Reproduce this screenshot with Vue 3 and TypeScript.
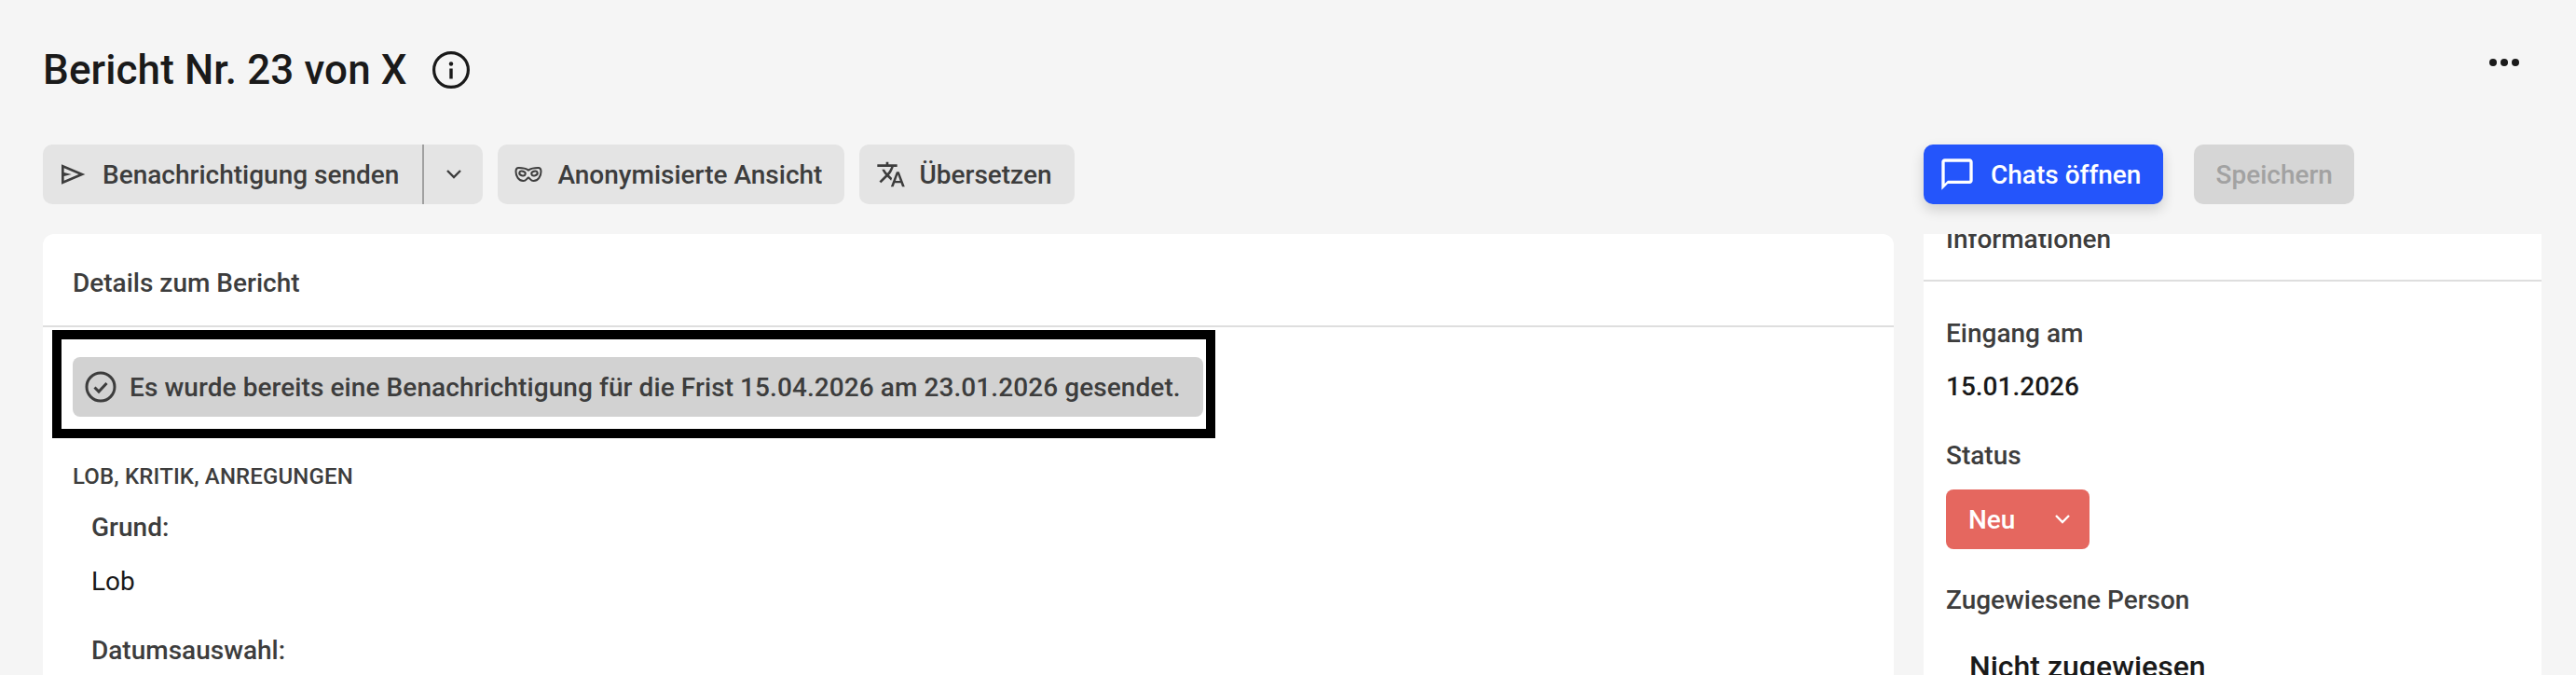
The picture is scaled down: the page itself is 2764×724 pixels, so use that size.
<template>
  <div class="page">
    <header class="page__head">
      <div class="page__title">
        <h1>Bericht Nr. 23 von X</h1>
        <svg class="info" width="40" height="40" viewBox="0 0 40 40" fill="none">
          <circle cx="20" cy="20" r="18.4" stroke="currentColor" stroke-width="3.2" />
          <circle cx="20" cy="13.5" r="2.2" fill="currentColor" />
          <rect x="18.3" y="18.5" width="3.4" height="11" fill="currentColor" />
        </svg>
      </div>
      <svg class="dots" width="32" height="8" viewBox="0 0 32 8" fill="currentColor">
        <circle cx="4" cy="4" r="4" /><circle cx="16" cy="4" r="4" /><circle cx="28" cy="4" r="4" />
      </svg>
    </header>

    <div class="grid">
      <div class="toolbar">
        <div class="btn btn--split">
          <span class="btn__main">
            <svg width="32" height="32" viewBox="0 -960 960 960" fill="currentColor"><path d="M120-160v-640l760 320-760 320Zm80-120 474-200-474-200v140l240 60-240 60v140Z" /></svg>
            Benachrichtigung senden
          </span>
          <span class="btn__caret">
            <svg width="20" height="12" viewBox="0 0 20 12" fill="none" stroke="currentColor" stroke-width="2.4"><path d="M3 2l7 7 7-7" /></svg>
          </span>
        </div>
        <div class="btn">
          <svg width="30" height="16" viewBox="0 0 30 16" fill="none" stroke="currentColor" stroke-width="2">
            <path d="M15 3.6C12.5 1.8 8.500 1 4.500 1 2.500 1 1.500 2.500 1.500 5c0 5 3 10 8 10 3 0 4-3 5.500-3.500C16.500 12 17.500 15 20.500 15c5 0 8-5 8-10 0-2.500-1-4-3-4-4 0-8 .8-10.500 2.600z" />
            <ellipse cx="8.500" cy="7" rx="3.300" ry="2.300" transform="rotate(18 8.500 7)" />
            <ellipse cx="21.500" cy="7" rx="3.300" ry="2.300" transform="rotate(-18 21.500 7)" />
          </svg>
          Anonymisierte Ansicht
        </div>
        <div class="btn btn--translate">
          <svg width="32" height="32" viewBox="0 -960 960 960" fill="currentColor"><path d="m476-80 182-480h84L924-80h-84l-43-122H603L560-80h-84ZM160-200l-56-56 202-202q-35-35-63.5-80T190-640h84q20 39 40 68t48 58q33-33 68.500-92.500T484-720H40v-80h280v-80h80v80h280v80H564q-21 72-63 148t-83 116l96 98-30 82-122-125-202 201Zm468-72h144l-72-204-72 204Z" /></svg>
          Übersetzen
        </div>
      </div>

      <div class="actions">
        <div class="btn btn--primary">
          <svg width="40" height="40" viewBox="0 0 24 24" fill="currentColor"><path d="M20 2H4c-1.100 0-2 .9-2 2v18l4-4h14c1.100 0 2-.9 2-2V4c0-1.100-.9-2-2-2zm0 14H6l-2 2V4h16v12z" /></svg>
          Chats öffnen
        </div>
        <div class="btn btn--disabled">Speichern</div>
      </div>

      <section class="card card--details">
        <div class="card__head">Details zum Bericht</div>
        <div class="marked">
          <div class="notice">
            <svg width="34" height="34" viewBox="0 0 34 34" fill="none" stroke="currentColor" stroke-width="3">
              <circle cx="17" cy="17" r="15" />
              <path d="M10.500 17.500l4.500 4.500 8.500-9" />
            </svg>
            Es wurde bereits eine Benachrichtigung für die Frist 15.04.2026 am 23.01.2026 gesendet.
          </div>
        </div>
        <h2 class="section">LOB, KRITIK, ANREGUNGEN</h2>
        <dl class="fields">
          <template v-for="f in fields" :key="f.label">
            <dt>{{ f.label }}</dt>
            <dd>{{ f.value }}</dd>
          </template>
        </dl>
      </section>

      <aside class="card card--info">
        <div class="info-head"><span>Informationen</span></div>
        <div class="info-body">
          <div class="label">Eingang am</div>
          <div class="value">15.01.2026</div>
          <div class="label label--status">Status</div>
          <div class="status">
            Neu
            <svg width="18" height="12" viewBox="0 0 18 12" fill="none" stroke="currentColor" stroke-width="2.400"><path d="M2 2l7 7 7-7" /></svg>
          </div>
          <div class="label label--person">Zugewiesene Person</div>
          <div class="person">Nicht zugewiesen</div>
        </div>
      </aside>
    </div>
  </div>
</template>

<script setup lang="ts">
const fields = [
  { label: 'Grund:', value: 'Lob' },
  { label: 'Datumsauswahl:', value: '15.01.2026' },
]
</script>

<style>
body { background: #f5f5f5; }
</style>

<style scoped>
.page {
  height: 724px; overflow: hidden;
  padding: 0 37px 0 46px;
  background: #f5f5f5; color: #3d3d3d;
  font-family: Roboto, "Liberation Sans", sans-serif;
}

.page__head { display: flex; justify-content: space-between; height: 155px; padding-top: 55px; box-sizing: border-box; }
.page__title { display: flex; align-items: center; gap: 27px; height: 40px; }
.page__title h1 { margin: 0; font-size: 44px; font-weight: 500; color: #1a1a1a; line-height: 40px; letter-spacing: .1px; }
.info { color: #1a1a1a; }
.dots { color: #1a1a1a; margin: 8px 24px 0 0; }

.grid { display: grid; grid-template-columns: 1fr 663px; grid-template-rows: 64px 1fr; gap: 32px; }

.toolbar { display: flex; gap: 16px; }
.actions { display: flex; gap: 33px; }

.btn {
  display: flex; align-items: center; gap: 16px;
  height: 64px; padding: 0 24px 0 18px; box-sizing: border-box;
  background: #e4e4e4; border-radius: 10px;
  font-size: 28px; font-weight: 500; white-space: nowrap;
}
.btn--split { padding: 0; gap: 0; }
.btn--translate { gap: 14px; }
.btn__main { display: flex; align-items: center; gap: 16px; height: 100%; padding: 0 25px 0 16px; border-right: 2px solid #a0a0a0; }
.btn__caret { display: flex; align-items: center; justify-content: center; width: 63px; }

.btn--primary {
  background: #2455fb; color: #fff; gap: 16px; padding: 0 24px 0 16px;
  box-shadow: 0 6px 14px rgba(0,0,0,0.16);
}
.btn--disabled { background: #d6d6d6; color: #a2a2a2; padding: 0 23px; }

.card { background: #fff; overflow: hidden; height: 473px; }
.card--details { border-radius: 12px 12px 0 0; }
.card__head {
  height: 100px; box-sizing: border-box; padding: 6px 32px 0;
  display: flex; align-items: center;
  border-bottom: 2px solid #dedede;
  font-size: 28px; font-weight: 500;
}

.marked { width: fit-content; margin: 3px 0 0 10px; padding: 19px 3px 13px 12px; border: 10px solid #000; }
.notice {
  display: flex; align-items: center; gap: 14px;
  height: 64px; padding: 0 24px 0 13px; box-sizing: border-box;
  background: #d2d2d2; border-radius: 8px;
  font-size: 28px; font-weight: 500; white-space: nowrap; letter-spacing: .08px;
}

.section { margin: 25px 0 0 32px; font-size: 24px; font-weight: 500; line-height: 32px; color: #3d3d3d; letter-spacing: .15px; }
.fields { margin: 21px 0 0 52px; font-size: 28px; }
.fields dt { font-weight: 500; line-height: 36px; }
.fields dd { margin: 22px 0 38px; line-height: 36px; color: #1a1a1a; }

.info-head { display: flow-root; height: 51px; border-bottom: 2px solid #dedede; box-sizing: border-box; padding: 0 24px; }
.info-head span { display: block; margin-top: -12px; font-size: 28px; font-weight: 500; line-height: 36px; }
.info-body { padding: 38px 24px 0; font-size: 28px; }

.label { font-weight: 500; line-height: 36px; }
.value { margin-top: 21px; line-height: 36px; font-weight: 500; color: #1a1a1a; }
.label--status { margin-top: 38px; }
.status {
  display: flex; align-items: center; justify-content: space-between;
  width: 154px; height: 64px; margin-top: 18px; padding: 0 20px 0 24px; box-sizing: border-box;
  background: #e5675f; border-radius: 8px;
  color: #fff; font-weight: 500;
}
.label--person { margin-top: 37px; }
.person { margin: 33px 0 0 25px; font-size: 32px; font-weight: 500; line-height: 40px; color: #1a1a1a; }
</style>
